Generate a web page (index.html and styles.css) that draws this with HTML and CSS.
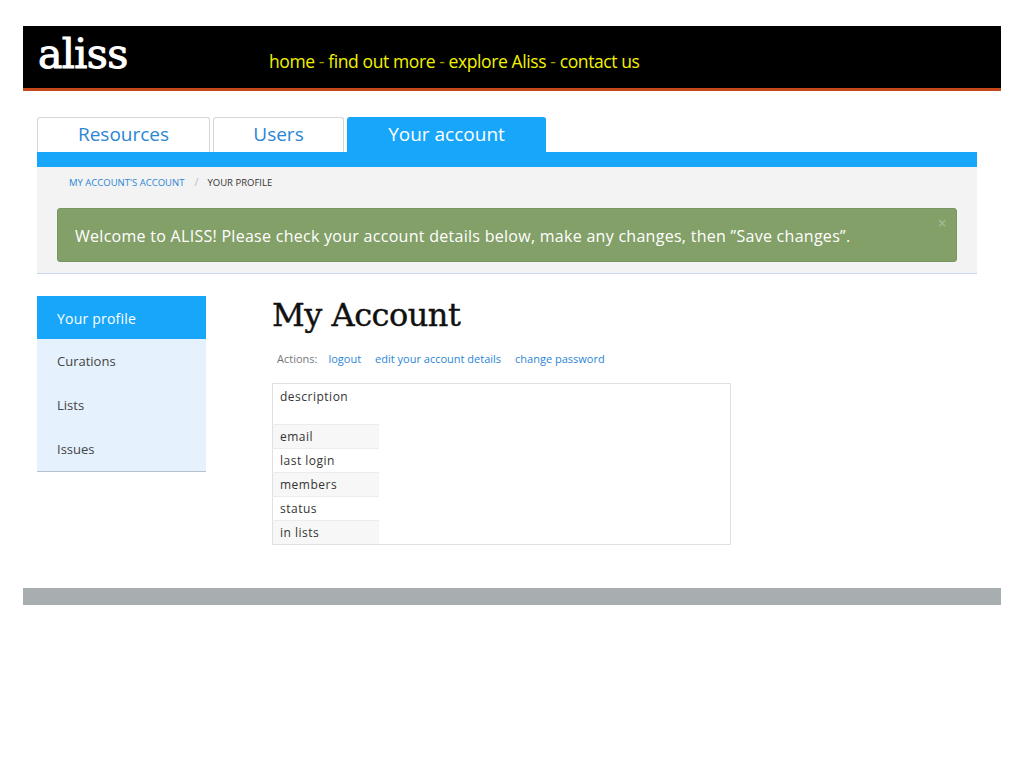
FILE: index.html
```html
<!DOCTYPE html>
<html>
<head>
<meta charset="utf-8">
<link rel="stylesheet" href="styles.css">
</head>
<body>
<div class="page">
  <header class="topbar">
    <div class="logo">aliss</div>
    <nav class="topnav">
      <a href="#">home</a><span class="sep"> - </span><a href="#">find out more</a><span class="sep"> - </span><a href="#">explore Aliss</a><span class="sep"> - </span><a href="#">contact us</a>
    </nav>
  </header>

  <div class="wrap">
    <div class="tabs">
      <a class="tab t1" href="#">Resources</a>
      <a class="tab t2" href="#">Users</a>
      <a class="tab t3 active" href="#">Your account</a>
    </div>
    <div class="tabline"></div>
    <div class="subhead">
      <div class="crumbs"><a href="#">MY ACCOUNT'S ACCOUNT</a><span class="slash">/</span><span class="cur">YOUR PROFILE</span></div>
      <div class="alert">Welcome to ALISS! Please check your account details below, make any changes, then ”Save changes”.<span class="close">×</span></div>
    </div>

    <div class="content">
      <ul class="side">
        <li class="active">Your profile</li>
        <li>Curations</li>
        <li>Lists</li>
        <li>Issues</li>
      </ul>
      <main class="main">
        <h1>My Account</h1>
        <div class="actions"><span class="lbl">Actions:</span><a href="#">logout</a><a href="#">edit your account details</a><a href="#">change password</a></div>
        <table class="details">
          <tr class="desc"><th>description</th><td></td></tr>
          <tr class="alt"><th>email</th><td></td></tr>
          <tr><th>last login</th><td></td></tr>
          <tr class="alt"><th>members</th><td></td></tr>
          <tr><th>status</th><td></td></tr>
          <tr class="alt"><th>in lists</th><td></td></tr>
        </table>
      </main>
    </div>
  </div>
  <footer class="footer"></footer>
</div>
</body>
</html>
```

FILE: styles.css
```css
* { box-sizing: border-box; }
body {
  margin: 0;
  background: #fff;
  font-family: "Open Sans", "Noto Sans", sans-serif;
}
a { text-decoration: none; }
.page {
  padding: 26px 23px 0 23px;
}
.topbar {
  height: 65px;
  background: #000;
  border-bottom: 3px solid #c4481a;
  display: flex;
  align-items: flex-start;
}
.logo {
  font-family: "DejaVu Serif", serif;
  color: #fff;
  font-size: 41px;
  line-height: 1;
  margin: 8px 0 0 15px;
  width: 231px;
  letter-spacing: -0.6px;
  -webkit-text-stroke: 1px #fff;
}
.topnav {
  margin-top: 23px;
  font-size: 17.5px;
  color: #e8e600;
  letter-spacing: -0.4px;
}
.topnav a { color: #f2f200; }
.topnav .sep { color: #a0a000; }

.wrap {
  margin: 26px 24px 0 14px;
}
.tabs {
  display: flex;
  gap: 3px;
  height: 35px;
}
.tab {
  display: flex;
  align-items: center;
  justify-content: center;
  border: 1px solid #d6d6d6;
  border-bottom: none;
  border-radius: 3px 3px 0 0;
  background: #fff;
  color: #2b86d6;
  font-size: 19px;
  padding-bottom: 3px;
}
.t1 { width: 173px; }
.t2 { width: 131px; }
.t3 { width: 199px; }
.tab.active {
  background: #17a6fa;
  border-color: #17a6fa;
  color: #fff;
}
.tabline {
  height: 15px;
  background: #17a6fa;
}
.subhead {
  background: #f3f3f3;
  border-bottom: 1px solid #c6d8ee;
  padding: 8px 20px 11px 20px;
}
.crumbs {
  font-size: 9.5px;
  padding-left: 12px;
  height: 17px;
  line-height: 13px;
  color: #333;
}
.crumbs a { color: #2b86d6; }
.crumbs .slash { color: #bbb; margin: 0 9px 0 10px; font-size: 11px; }
.alert {
  margin-top: 16px;
  position: relative;
  background: #84a069;
  border: 1px solid #779660;
  border-radius: 3px;
  color: #fff;
  font-size: 16px;
  height: 54px;
  line-height: 54px;
  padding-left: 17px;
  letter-spacing: 0.28px;
}
.alert .close {
  position: absolute;
  right: 9px;
  top: -13px;
  color: #a9bd97;
  font-size: 16px;
}

.content {
  display: flex;
  margin-top: 22px;
  align-items: flex-start;
}
.side {
  list-style: none;
  margin: 0;
  padding: 0;
  width: 169px;
  background: #e5f1fd;
  border-bottom: 1px solid #b8c1c9;
}
.side li {
  height: 44px;
  line-height: 44px;
  padding-left: 20px;
  font-size: 13px;
  color: #444;
}
.side li.active {
  background: #17a6fa;
  color: #fff;
  height: 43px;
  line-height: 45px;
  font-size: 14px;
  letter-spacing: 0.2px;
}
.main {
  margin-left: 66px;
  width: 459px;
}
h1 {
  font-family: "DejaVu Serif", serif;
  font-weight: normal;
  font-size: 32px;
  color: #111;
  margin: 0;
  height: 51px;
  line-height: 38px;
  letter-spacing: -0.5px;
  -webkit-text-stroke: 0.4px #111;
}
.actions {
  font-size: 11px;
  padding-left: 5px;
  height: 24px;
  line-height: 24px;
}
.actions .lbl { color: #777; margin-right: 11px; }
.actions a { color: #2b86d6; margin-right: 14px; }
.details {
  margin-top: 12px;
  width: 459px;
  border-collapse: collapse;
  border: 1px solid #e0e0e0;
}
.details th {
  width: 106px;
  text-align: left;
  font-weight: normal;
  font-size: 12px;
  color: #333;
  padding: 0 0 0 7px;
  height: 24px;
  letter-spacing: 0.5px;
  border-top: 1px solid #ececec;
}
.details tr.desc th {
  height: 41px;
  vertical-align: top;
  padding-top: 4px;
  border-top: none;
}
.details tr.alt th { background: #f7f7f7; }
.details td { background: #fff; }
.footer {
  height: 17px;
  background: #a8adb0;
  margin-top: 43px;
}
```
